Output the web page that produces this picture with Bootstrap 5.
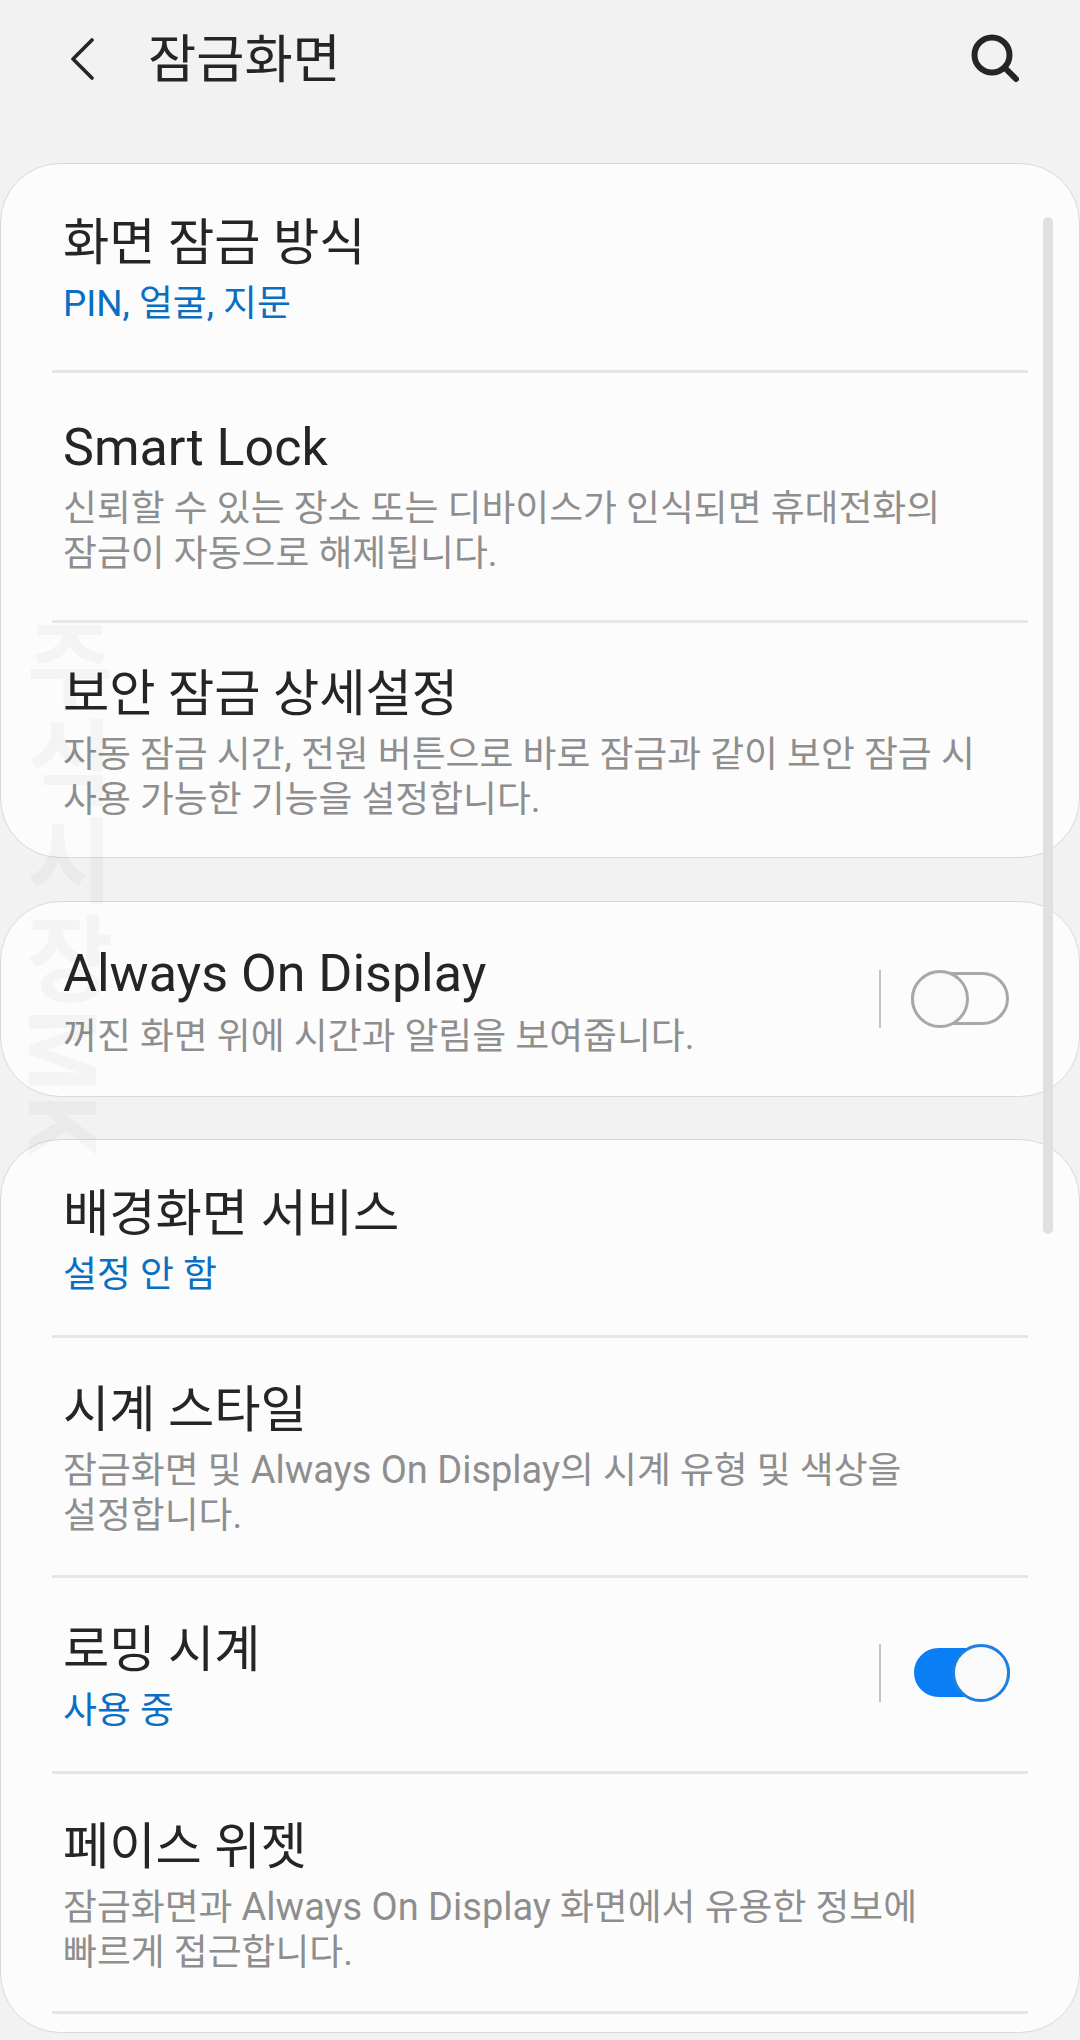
<!DOCTYPE html>
<html lang="ko">
<head>
  <meta charset="UTF-8" />
  <meta name="viewport" content="width=device-width, initial-scale=1.0"/>
  <title>잠금화면</title>
  <link href="https://cdn.jsdelivr.net/npm/bootstrap@5.3.3/dist/css/bootstrap.min.css" rel="stylesheet">
  <style>
    html, body { height: 2040px; overflow: hidden; }
    body {
      background: #f2f2f2;
      font-family: Roboto, "Noto Sans CJK KR", sans-serif;
      color: #252525;
      position: relative;
    }
    .top-bar { height: 163px; padding: 34px 61px 0 70px; }
    .top-title { font-size: 52.4px; line-height: 48px; margin-left: 54px; margin-top: 2px; }
    .setting-card {
      background: #fcfcfc;
      border: 1px solid #d9d9d9;
      border-radius: 60px;
      padding: 0 51px;
      margin-bottom: 43px;
    }
    .setting-card.aod-card { margin-bottom: 42px; }
    .setting-card .list-group-item {
      background: transparent;
      border: 0;
      border-bottom: 3px solid #e6e6e6;
      padding: 40px 12px 40px 11px;
      color: inherit;
    }
    .setting-card .list-group-item:last-child { border-bottom: 0; }
    /* row paddings read off the reference */
    .setting-card .list-group-item.lock-method { padding-top: 49px; padding-bottom: 44px; }
    .setting-card .list-group-item.smart-lock { padding-top: 45px; padding-bottom: 44px; }
    .setting-card .list-group-item.lock-extra { padding-top: 41px; padding-bottom: 35px; }
    .setting-card .list-group-item.aod { padding-top: 42px; padding-bottom: 37px; }
    .setting-card .list-group-item.wallpaper { padding-top: 44px; padding-bottom: 38px; }
    .setting-card .list-group-item.clock-row { padding-top: 42px; padding-bottom: 37px; }
    .setting-card .list-group-item.roam-row { padding-top: 42px; padding-bottom: 38px; }
    .setting-card .list-group-item.face-row { padding-top: 43px; padding-bottom: 36px; }
    .setting-card .list-group-item.card-end { padding: 0; height: 18px; }
    .item-title { font-size: 50.3px; line-height: 60px; margin-bottom: 8px; }
    .item-title.latin { font-size: 52px; }
    .aod .item-title { margin-bottom: 10px; }
    .item-sub { font-size: 36.85px; line-height: 45px; color: #8e8e8e; }
    .item-sub.on { color: #0a6fc2; }
    .sub-latin { font-size: 38px; }
    .tail-line { width: 2px; height: 58px; background: #c4c4c4; margin-right: 30px; margin-bottom: 6px; }
    .roam-row .tail-line { margin-bottom: 8px; }
    .sw { display: block; position: relative; width: 98px; height: 53px; margin-right: 7px; margin-bottom: 6px; border-radius: 27px; border: 3px solid #a8a8a8; }
    .sw-knob { position: absolute; top: -5px; left: -3px; width: 58px; height: 58px; border-radius: 50%; border: 3px solid #a8a8a8; background: #fafafa; }
    .sw.active { background: #0a7ff5; border-color: #0a7ff5; width: 96px; height: 49px; margin-left: 3px; margin-right: 6px; margin-bottom: 8px; }
    .sw.active .sw-knob { top: -7px; left: auto; right: -3px; border-color: #1f80e0; }
    .scroll-thumb { position: absolute; left: 1043px; top: 217px; width: 10px; height: 1017px; border-radius: 5px; background: #e0e0e0; }
    .stamp {
      position: absolute; left: 13px; top: 617px;
      writing-mode: vertical-rl;
      font-size: 94px; line-height: 96px; letter-spacing: 4px; font-weight: 700;
      color: rgba(0, 0, 0, .03);
      pointer-events: none;
    }
  </style>
</head>
<body>
  <div class="top-bar d-flex align-items-start">
    <svg width="24" height="42" viewBox="0 0 24 42" class="mt-1" fill="none" stroke="#252525" stroke-width="3.6" stroke-linecap="round" stroke-linejoin="round"><path d="M22 2 3 21l19 19"/></svg>
    <div class="top-title flex-grow-1">잠금화면</div>
    <svg width="48" height="48" viewBox="0 0 48 48" fill="none" stroke="#252525" stroke-width="6" stroke-linecap="round"><circle cx="21" cy="21" r="17.5"/><path d="m34 34 11 11"/></svg>
  </div>

  <div class="setting-card card">
    <div class="list-group list-group-flush">
      <div class="list-group-item lock-method">
        <div class="item-title">화면 잠금 방식</div>
        <div class="item-sub on">PIN, 얼굴, 지문</div>
      </div>
      <div class="list-group-item smart-lock">
        <div class="item-title latin">Smart Lock</div>
        <div class="item-sub">신뢰할 수 있는 장소 또는 디바이스가 인식되면 휴대전화의<br>잠금이 자동으로 해제됩니다.</div>
      </div>
      <div class="list-group-item lock-extra">
        <div class="item-title">보안 잠금 상세설정</div>
        <div class="item-sub">자동 잠금 시간, 전원 버튼으로 바로 잠금과 같이 보안 잠금 시<br>사용 가능한 기능을 설정합니다.</div>
      </div>
    </div>
  </div>

  <div class="setting-card aod-card card">
    <div class="list-group list-group-flush">
      <div class="list-group-item aod d-flex align-items-center">
        <div class="flex-grow-1">
          <div class="item-title latin">Always On Display</div>
          <div class="item-sub">꺼진 화면 위에 시간과 알림을 보여줍니다.</div>
        </div>
        <span class="tail-line"></span>
        <span class="sw"><span class="sw-knob"></span></span>
      </div>
    </div>
  </div>

  <div class="setting-card card">
    <div class="list-group list-group-flush">
      <div class="list-group-item wallpaper">
        <div class="item-title">배경화면 서비스</div>
        <div class="item-sub on">설정 안 함</div>
      </div>
      <div class="list-group-item clock-row">
        <div class="item-title">시계 스타일</div>
        <div class="item-sub">잠금화면 및 <span class="sub-latin">Always On Display</span>의 시계 유형 및 색상을<br>설정합니다.</div>
      </div>
      <div class="list-group-item roam-row d-flex align-items-center">
        <div class="flex-grow-1">
          <div class="item-title">로밍 시계</div>
          <div class="item-sub on">사용 중</div>
        </div>
        <span class="tail-line"></span>
        <span class="sw active"><span class="sw-knob"></span></span>
      </div>
      <div class="list-group-item face-row">
        <div class="item-title">페이스 위젯</div>
        <div class="item-sub">잠금화면과 <span class="sub-latin">Always On Display</span> 화면에서 유용한 정보에<br>빠르게 접근합니다.</div>
      </div>
      <div class="list-group-item card-end"></div>
    </div>
  </div>

  <div class="scroll-thumb"></div>
  <div class="stamp">주식시장MK</div>
  <script src="https://cdn.jsdelivr.net/npm/bootstrap@5.3.3/dist/js/bootstrap.bundle.min.js"></script>
</body>
</html>
